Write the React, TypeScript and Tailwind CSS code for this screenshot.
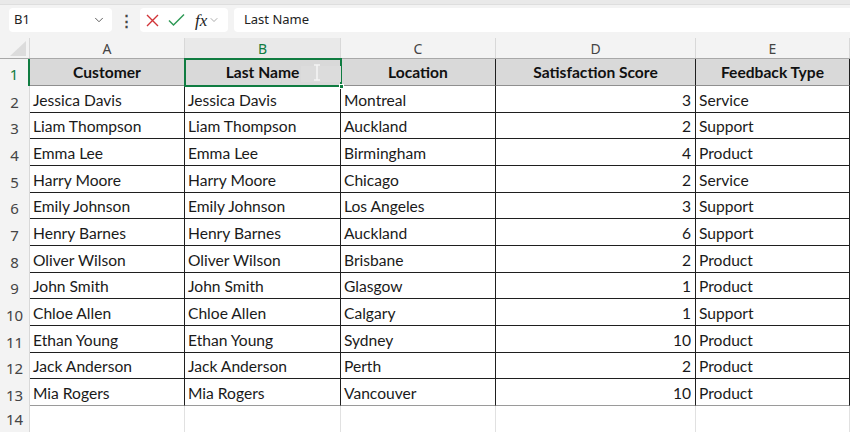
import { ChevronDown } from "lucide-react";

const rows = [
  ["Jessica Davis", "Jessica Davis", "Montreal", "3", "Service"],
  ["Liam Thompson", "Liam Thompson", "Auckland", "2", "Support"],
  ["Emma Lee", "Emma Lee", "Birmingham", "4", "Product"],
  ["Harry Moore", "Harry Moore", "Chicago", "2", "Service"],
  ["Emily Johnson", "Emily Johnson", "Los Angeles", "3", "Support"],
  ["Henry Barnes", "Henry Barnes", "Auckland", "6", "Support"],
  ["Oliver Wilson", "Oliver Wilson", "Brisbane", "2", "Product"],
  ["John Smith", "John Smith", "Glasgow", "1", "Product"],
  ["Chloe Allen", "Chloe Allen", "Calgary", "1", "Support"],
  ["Ethan Young", "Ethan Young", "Sydney", "10", "Product"],
  ["Jack Anderson", "Jack Anderson", "Perth", "2", "Product"],
  ["Mia Rogers", "Mia Rogers", "Vancouver", "10", "Product"],
];

const heights = ["h-[27px]", "h-[26px]", "h-[27px]", "h-[27px]", "h-[26px]", "h-[27px]", "h-[27px]", "h-[26px]", "h-[27px]", "h-[27px]", "h-[26px]", "h-[27px]"];
const widths = ["w-[155px]", "w-[156px]", "w-[155px]", "w-[200px]", "w-[154px]"];
const letters = ["A", "B", "C", "D", "E"];
const headers = ["Customer", "Last Name", "Location", "Satisfaction Score", "Feedback Type"];

const cellFont = { fontFamily: "Lato, 'Liberation Sans', sans-serif" };

export default function App() {
  return (
    <div className="w-[850px] h-[432px] overflow-hidden bg-white relative" style={{ fontFamily: "'Noto Sans', 'Open Sans', sans-serif" }}>
      {/* ribbon edge */}
      <div className="h-[5px] bg-[#e9e9e9] border-b border-[#dedede]" />

      {/* formula bar */}
      <div className="h-[33px] bg-[#f3f3f3] flex items-center pl-[9px] gap-[6px] pb-[3px]">
        <div className="w-[103px] h-[24px] bg-white rounded-[4px] flex items-center justify-between pl-[5px] pr-[6px] text-[13px] text-[#222]">
          <span>B1</span>
          <ChevronDown size={14} strokeWidth={1.6} className="text-[#555]" />
        </div>
        <div className="w-[16px] flex justify-center text-[#444] text-[15px] font-bold leading-none">⋮</div>
        <div className="w-[88px] h-[24px] bg-white rounded-[4px] flex items-center pl-[6px] gap-[9px]">
          <svg width="13" height="13" viewBox="0 0 13 13">
            <path d="M1 1 L12 12 M12 1 L1 12" stroke="#d13438" strokeWidth="1.4" fill="none" />
          </svg>
          <svg width="17" height="14" viewBox="0 0 17 14">
            <path d="M1 7.5 L5.5 12 L16 1.5" stroke="#2f9a57" strokeWidth="1.5" fill="none" />
          </svg>
          <div className="flex items-center gap-[1px] ml-[1px]">
            <span className="italic text-[17px] text-[#222] leading-none" style={{ fontFamily: "'Liberation Serif', serif" }}>fx</span>
            <ChevronDown size={12} strokeWidth={1.4} className="text-[#888]" />
          </div>
        </div>
        <div className="flex-1 h-[24px] bg-white rounded-l-[4px] flex items-center pl-[10px] text-[13px] text-[#222]">
          Last Name
        </div>
      </div>

      {/* column headers */}
      <div className="flex h-[21px] bg-[#f3f3f3] border-b border-[#a8a8a8]">
        <div className="w-[30px] relative border-r border-[#d8d8d8]">
          <svg className="absolute right-[3px] bottom-[2px]" width="16" height="15" viewBox="0 0 16 15">
            <path d="M16 0 L16 15 L0 15 Z" fill="#dcdcdc" />
          </svg>
        </div>
        {letters.map((l, i) => (
          <div
            key={l}
            className={`${widths[i]} flex items-center justify-center text-[14px] border-r border-[#d8d8d8] ${i === 1 ? "bg-[#e9e9e9] text-[#107c41]" : "text-[#444]"}`}
          >
            {l}
          </div>
        ))}
      </div>

      {/* header row 1 */}
      <div className="flex h-[27px]">
        <div className="w-[30px] bg-[#f3f3f3] border-r-2 border-[#107c41] flex items-end justify-center pb-[1px] text-[15px] text-[#107c41]">1</div>
        {headers.map((h, i) => (
          <div
            key={h}
            className={`${widths[i]} bg-[#d9d9d9] border-r border-b border-r-[#1f1f1f] border-b-[#8f8f8f] flex items-center justify-center pt-[2px] text-[15.6px] font-bold text-[#111]`}
            style={cellFont}
          >
            {h}
          </div>
        ))}
      </div>

      {/* data rows */}
      {rows.map((r, ri) => (
        <div key={ri} className={`flex ${heights[ri]}`}>
          <div className="w-[30px] bg-[#f3f3f3] border-r border-[#d8d8d8] flex items-end justify-center text-[15px] text-[#444]">
            {ri + 2}
          </div>
          {r.map((c, ci) => (
            <div
              key={ci}
              className={`${widths[ci]} border-r border-b border-r-[#1f1f1f] ${ri === rows.length - 1 ? "border-b-[#9a9a9a]" : "border-b-[#1f1f1f]"} flex items-center pt-[3px] text-[15.6px] text-[#1a1a1a] ${ci === 3 ? "justify-end pr-[4px]" : "pl-[3px]"}`}
              style={cellFont}
            >
              {c}
            </div>
          ))}
        </div>
      ))}

      {/* empty row 14 */}
      <div className="flex h-[27px]">
        <div className="w-[30px] bg-[#f3f3f3] border-r border-[#d8d8d8] flex items-center justify-center text-[15px] text-[#444]">14</div>
        {widths.map((w, i) => (
          <div key={i} className={`${w} border-r border-[#e1e1e1]`} />
        ))}
      </div>

      {/* selection on B1 */}
      <div className="absolute left-[184px] top-[58px] w-[158px] h-[29px] border-2 border-[#107c41] pointer-events-none">
        <div className="absolute right-[-4px] bottom-[-4px] w-[5px] h-[5px] bg-[#107c41] border border-white" />
        <div className="absolute left-[115px] top-[6px] w-[40px] h-[16px] bg-[#dcdcdc]" />
        <svg className="absolute left-[127px] top-[4px]" width="8" height="17" viewBox="0 0 8 17">
          <path d="M1 1 H7 M4 1 V16 M1 16 H7" stroke="#f4f4f4" strokeWidth="1.6" fill="none" />
        </svg>
      </div>
    </div>
  );
}
